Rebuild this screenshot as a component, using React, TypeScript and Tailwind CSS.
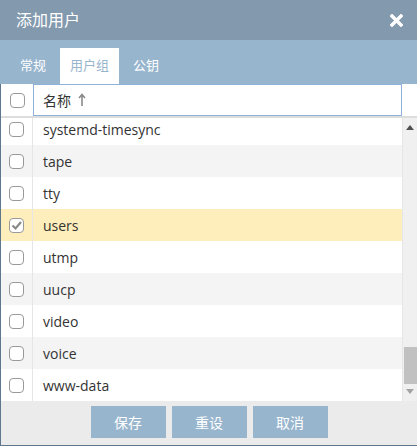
import React from "react";

const rows = [
  { name: "systemd-timesync", bg: "bg-white" },
  { name: "tape", bg: "bg-[#f4f4f4]" },
  { name: "tty", bg: "bg-white" },
  { name: "users", bg: "bg-[#fdeebb]", checked: true },
  { name: "utmp", bg: "bg-white" },
  { name: "uucp", bg: "bg-[#f4f4f4]" },
  { name: "video", bg: "bg-white" },
  { name: "voice", bg: "bg-[#f4f4f4]" },
  { name: "www-data", bg: "bg-white" },
];

function Box({ checked }: { checked?: boolean }) {
  return (
    <div className="w-[15px] h-[15px] rounded-[4px] border border-[#9a9a9a] bg-white flex items-center justify-center">
      {checked && (
        <svg width="11" height="11" viewBox="0 0 11 11">
          <path d="M1.5 5.5 L4.5 8.5 L10 2" stroke="#8a8a8a" strokeWidth="2.2" fill="none" />
        </svg>
      )}
    </div>
  );
}

export default function App() {
  return (
    <div
      className="w-[417px] h-[446px] flex flex-col bg-white overflow-hidden"
      style={{ fontFamily: '"Open Sans", "Noto Sans CJK SC", sans-serif' }}
    >
      <div className="h-[40px] bg-[#8299ae] flex items-center justify-between pl-[16px] pr-[14px]">
        <span className="text-white text-[16px]">添加用户</span>
        <svg width="13" height="13" viewBox="0 0 13 13">
          <path d="M2 2 L11 11 M11 2 L2 11" stroke="#ffffff" strokeWidth="3.4" strokeLinecap="square" />
        </svg>
      </div>
      <div className="h-[44px] bg-[#98b5ce] flex items-end pl-[10px] gap-[4px] text-[13px] text-white">
        <div className="h-[36px] px-[10px] flex items-center">常规</div>
        <div className="h-[36px] px-[10px] flex items-center bg-white text-[#98b5ce]">用户组</div>
        <div className="h-[36px] px-[10px] flex items-center">公钥</div>
      </div>
      <div className="flex-1 flex flex-col border-l border-[#5f778c] border-b min-h-0">
        <div className="h-[32px] flex shrink-0">
          <div className="w-[32px] flex items-center justify-center">
            <Box />
          </div>
          <div className="w-[369px] border border-[#8db3dd] flex items-center pl-[9px] text-[14px] text-[#333]">
            名称
            <svg className="ml-[7px]" width="8" height="14" viewBox="0 0 8 14">
              <path d="M4 13 V2 M1 5 L4 1.5 L7 5" stroke="#8a8a8a" strokeWidth="1.6" fill="none" />
            </svg>
          </div>
        </div>
        <div className="h-[2px] bg-[#dddddd] shrink-0" />
        <div className="flex flex-1 min-h-0">
          <div className="flex-1 overflow-hidden">
            <div className="-mt-[5px]">
              {rows.map((r) => (
                <div key={r.name} className={`h-[32px] flex ${r.bg}`}>
                  <div className="w-[32px] border-r border-[#e6e6e6] flex items-center justify-center">
                    <Box checked={r.checked} />
                  </div>
                  <div className="flex items-center pl-[10px] text-[14px] text-[#333]">{r.name}</div>
                </div>
              ))}
            </div>
          </div>
          <div className="w-[15px] bg-[#f0f0f0] border-l border-[#e6e6e6] flex flex-col items-center">
            <svg className="mt-[7px]" width="8" height="5" viewBox="0 0 8 5">
              <path d="M0 5 L4 0 L8 5 Z" fill="#505050" />
            </svg>
            <div className="flex-1" />
            <div className="w-[13px] h-[37px] bg-[#c1c1c1] ml-[1px]" />
            <svg className="mt-[5px] mb-[7px]" width="8" height="5" viewBox="0 0 8 5">
              <path d="M0 0 L8 0 L4 5 Z" fill="#a3a3a3" />
            </svg>
          </div>
        </div>
        <div className="h-[44px] bg-[#ebebeb] flex items-start justify-center gap-[6px] pt-[5px] shrink-0">
          {["保存", "重设", "取消"].map((t) => (
            <div key={t} className="w-[75px] h-[32px] bg-[#98b5ce] text-white text-[14px] flex items-center justify-center">
              {t}
            </div>
          ))}
        </div>
      </div>
    </div>
  );
}
